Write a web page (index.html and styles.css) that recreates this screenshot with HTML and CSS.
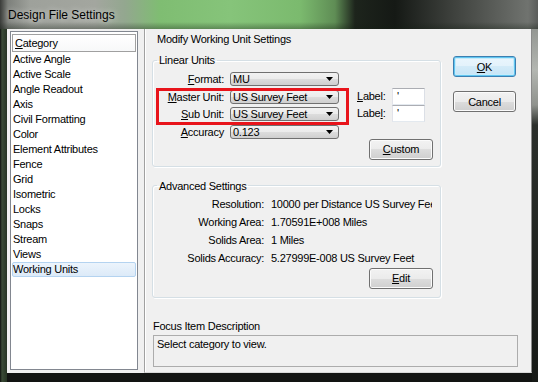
FILE: index.html
```html
<!DOCTYPE html>
<html>
<head>
<meta charset="utf-8">
<title>Design File Settings</title>
<link rel="stylesheet" href="styles.css">
</head>
<body>
<div class="window">
  <div class="titlebar"><span class="title">Design File Settings</span></div>
  <div class="client">
    <div class="listbox">
      <div class="lb-header"><u>C</u>ategory</div>
      <ul class="lb-items">
        <li>Active Angle</li>
        <li>Active Scale</li>
        <li>Angle Readout</li>
        <li>Axis</li>
        <li>Civil Formatting</li>
        <li>Color</li>
        <li>Element Attributes</li>
        <li>Fence</li>
        <li>Grid</li>
        <li>Isometric</li>
        <li>Locks</li>
        <li>Snaps</li>
        <li>Stream</li>
        <li>Views</li>
        <li class="sel">Working Units</li>
      </ul>
    </div>
    <div class="panel">
      <div class="panel-top">
        <div class="main-col">
          <div class="heading">Modify Working Unit Settings</div>
          <fieldset class="group linear">
            <legend>Linear Units</legend>
            <div class="lu-grid">
              <span class="lbl"><u>F</u>ormat:</span>
              <div class="combo"><span>MU</span><svg width="7" height="4" viewBox="0 0 7 4"><path d="M0 0H7L3.5 4Z"/></svg></div>
              <span class="lbl"><u>M</u>aster Unit:</span>
              <div class="combo"><span>US Survey Feet</span><svg width="7" height="4" viewBox="0 0 7 4"><path d="M0 0H7L3.5 4Z"/></svg></div>
              <span class="lbl"><u>S</u>ub Unit:</span>
              <div class="combo"><span>US Survey Feet</span><svg width="7" height="4" viewBox="0 0 7 4"><path d="M0 0H7L3.5 4Z"/></svg></div>
              <span class="lbl"><u>A</u>ccuracy</span>
              <div class="combo"><span>0.123</span><svg width="7" height="4" viewBox="0 0 7 4"><path d="M0 0H7L3.5 4Z"/></svg></div>
              <div class="labels">
                <span class="lbl2"><u>L</u>abel:</span>
                <div class="tbox">'</div>
                <span class="lbl2">Labe<u>l</u>:</span>
                <div class="tbox">'</div>
              </div>
              <div class="highlight"></div>
            </div>
            <div class="btn-row"><button class="btn"><u>C</u>ustom</button></div>
          </fieldset>
          <fieldset class="group advanced">
            <legend>Advanced Settings</legend>
            <div class="adv-grid">
              <span class="k">Resolution:</span><span class="v">10000 per Distance US Survey Feet</span>
              <span class="k">Working Area:</span><span class="v">1.70591E+008 Miles</span>
              <span class="k">Solids Area:</span><span class="v">1 Miles</span>
              <span class="k">Solids Accuracy:</span><span class="v">5.27999E-008 US Survey Feet</span>
            </div>
            <div class="btn-row edit-row"><button class="btn"><u>E</u>dit</button></div>
          </fieldset>
        </div>
        <div class="btn-col">
          <button class="btn default"><u>O</u>K</button>
          <button class="btn">Cancel</button>
        </div>
      </div>
      <div class="focus">
        <div class="focus-label">Focus Item Description</div>
        <div class="focus-box">Select category to view.</div>
      </div>
    </div>
  </div>
</div>
</body>
</html>
```

FILE: styles.css
```css
* { box-sizing: border-box; }
html, body { margin: 0; padding: 0; }
body {
  width: 538px;
  height: 382px;
  overflow: hidden;
  background: #141714;
  font: 11px/14px "Liberation Sans", Arial, sans-serif;
  letter-spacing: -0.25px;
  color: #000;
}
u { text-decoration: underline; text-underline-offset: 1px; }

.window {
  width: 538px;
  height: 382px;
  display: flex;
  flex-direction: column;
  background:
    linear-gradient(to bottom, #7d807c 0, #b3b6b1 70px, #8f928d 105px, #2b2f2b 125px, #161916 382px) right top / 6px 100% no-repeat,
    linear-gradient(to right, #0d0f0d 0, #3a4a36 2px, #263423 7px) left top / 7px 100% no-repeat,
    #121412;
}

.titlebar {
  height: 29px;
  flex: none;
  display: flex;
  align-items: center;
  padding-left: 8px;
  background:
    linear-gradient(to bottom, rgba(0,0,0,0) 0, rgba(0,0,0,0) 22px, rgba(20,30,20,0.35) 29px),
    linear-gradient(to right, #3a3c39 0, #7d807b 8px, #9ea19b 30px, #a3a69f 95px, #93a78f 125px, #7fbd72 160px, #86c47a 230px, #7bba6e 300px, #5f8d55 335px, #1d241c 355px, #151915 395px, #3c3f3b 450px, #70736f 528px, #5a5c5a 538px);
}
.title {
  font-size: 12px;
  letter-spacing: 0;
  color: #000;
  text-shadow: 0 0 6px rgba(255,255,255,0.7);
}

.client {
  flex: 1;
  display: flex;
  margin: 0 6px 9px 7px;
  background: #f0f0f0;
}

.listbox {
  flex: none;
  width: 128px;
  height: 339px;
  margin: 2px 6px 0 3px;
  background: #fff;
  border: 1px solid #828790;
}
.lb-header {
  height: 18px;
  margin: 2px 1px 0 1px;
  padding-left: 2px;
  border: 1px solid #a0a0a0;
  line-height: 16px;
  background: linear-gradient(#ffffff, #f7f8f9);
}
.lb-items {
  list-style: none;
  margin: 0;
  padding: 0;
}
.lb-items li {
  height: 15px;
  margin: 0 1px;
  border: 1px solid transparent;
  line-height: 13px;
  white-space: nowrap;
}
.lb-items li.sel {
  border-color: #b4d3f0;
  border-radius: 2px;
  background: linear-gradient(#ecf4fc, #dceaf8);
}

.panel {
  flex: 1;
  display: flex;
  flex-direction: column;
  padding: 3px 0 5px 0;
  border-left: 1px solid #a0a0a0;
  border-right: 1px solid #8a8a8a;
  border-bottom: 1px solid #d8d8d8;
  box-shadow: inset 1px 0 0 #ffffff;
}
.panel-top { display: flex; }
.main-col { padding-left: 7px; width: 296px; flex: none; }
.heading { padding-left: 5px; height: 14px; }

.group {
  margin: 0;
  padding: 0;
  width: 289px;
  min-width: 0;
  border: 1px solid #d5dfe5;
  border-radius: 3px;
  box-shadow: inset 1px 1px 0 #fff, 1px 1px 0 #fff;
}
.group legend {
  padding: 0 2px;
  margin-left: 4px;
  line-height: 14px;
}
.linear { margin-top: 7px; padding: 5px 0 6px 0; }
.advanced { margin-top: 12px; padding: 2px 0 8px 0; }

.lu-grid {
  position: relative;
  display: grid;
  grid-template-columns: 71px 109px auto;
  grid-template-rows: repeat(4, 14px);
  column-gap: 6px;
  row-gap: 3.5px;
}
.lbl { text-align: right; white-space: nowrap; line-height: 14px; grid-column: 1; }
.combo {
  grid-column: 2;
  display: flex;
  align-items: center;
  justify-content: space-between;
  height: 14px;
  padding: 0 5px 0 2px;
  border: 1px solid #707070;
  border-radius: 3px;
  line-height: 12px;
  white-space: nowrap;
  background: linear-gradient(#f2f2f2 0%, #ebebeb 50%, #dddddd 50%, #cfcfcf 100%);
}
.combo svg { flex: none; display: block; }
.combo path { fill: #000; }

.labels {
  grid-column: 3;
  grid-row: 2 / span 2;
  align-self: start;
  margin: -1.5px 0 0 12px;
  display: grid;
  grid-template-columns: 30px 33px;
  grid-template-rows: 17px 17px;
  column-gap: 5px;
}
.lbl2 { line-height: 17px; white-space: nowrap; }
.tbox {
  background: #fff;
  border: 1px solid;
  border-color: #abadb3 #dbdfe6 #e3e9ef #e2e3ea;
  padding: 0 4px;
  line-height: 14px;
}

.highlight {
  position: absolute;
  left: 3px;
  top: 16px;
  width: 193px;
  height: 37px;
  border: 3px solid #e8141b;
  pointer-events: none;
}

.btn-row { display: flex; justify-content: flex-end; padding-right: 7px; }
.edit-row { margin-top: 1px; }

.btn {
  width: 64px;
  height: 21px;
  padding: 0;
  font: inherit;
  letter-spacing: inherit;
  color: #000;
  border: 1px solid #707070;
  border-radius: 3px;
  background: linear-gradient(#f2f2f2 0%, #ebebeb 50%, #dddddd 50%, #cfcfcf 100%);
  box-shadow: inset 0 0 0 1px #fbfbfb;
}
.btn.default {
  border-color: #3c7fb1;
  box-shadow: inset 0 0 0 1px #61c6f0, inset 0 0 0 2px #c6ebfb;
  background: linear-gradient(#eaf6fd 0%, #e3f2fb 50%, #d3ebf8 50%, #c6e4f6 100%);
}

.adv-grid {
  display: grid;
  grid-template-columns: 111px 161px;
  column-gap: 7px;
  line-height: 18px;
}
.k { text-align: right; white-space: nowrap; }
.v { white-space: nowrap; overflow: hidden; }

.btn-col {
  margin-left: 12px;
  padding-top: 24px;
  display: flex;
  flex-direction: column;
  gap: 14px;
}
.btn-col .btn { width: 63px; }

.focus { margin: auto 13px 0 8px; }
.focus-label { line-height: 14px; }
.focus-box {
  margin-top: 2px;
  height: 32px;
  padding: 1px 3px;
  border: 1px solid #acacac;
  background: #f0f0f0;
  line-height: 14px;
}
```
